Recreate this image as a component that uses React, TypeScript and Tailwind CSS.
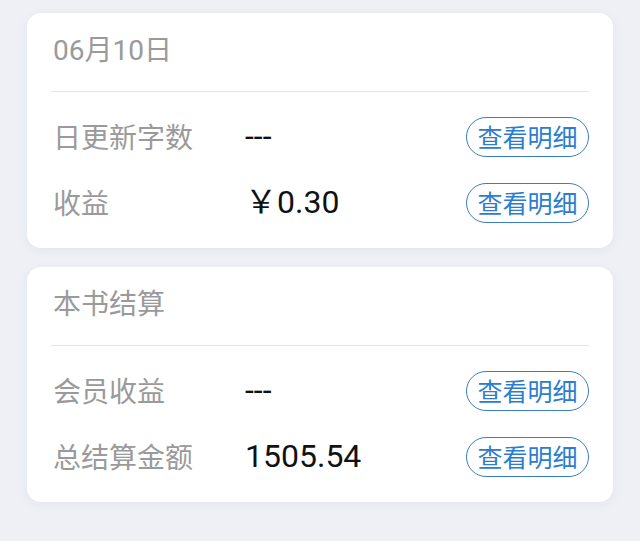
import React from "react";

const cjk = '"Noto Sans CJK SC", "Noto Sans", sans-serif';
const num = 'Roboto, "Noto Sans CJK SC", sans-serif';

function DetailButton() {
  return (
    <button
      className="h-[40px] w-[123px] rounded-full border-[1.5px] border-[#3a7cc0] text-[25px] leading-none text-[#2a7dd0] flex items-center justify-center pb-[1px]"
      style={{ fontFamily: cjk }}
    >
      查看明细
    </button>
  );
}

function Row({ label, value }: { label: string; value: string }) {
  return (
    <div className="h-[66px] flex items-center">
      <div className="w-[194px] text-[28px] leading-none text-[#9a9a9a] pl-[2px] pb-[3px]" style={{ fontFamily: cjk }}>
        {label}
      </div>
      <div className="flex-1 text-[32px] text-[#111] leading-none pb-[3px]" style={{ fontFamily: num }}>
        {value}
      </div>
      <DetailButton />
    </div>
  );
}

function Card({ title, rows }: { title: string; rows: { label: string; value: string }[] }) {
  return (
    <div className="bg-white rounded-[14px] shadow-[0_2px_8px_rgba(160,170,200,0.15)] px-6 pb-[12px]">
      <div className="h-[78px] flex items-center pl-[2px] pb-[3px] text-[28px] leading-none text-[#9a9a9a]" style={{ fontFamily: num }}>
        {title}
      </div>
      <div className="h-px bg-[#e6e6e8]" />
      <div className="pt-[12px]">
        {rows.map((r) => (
          <Row key={r.label} label={r.label} value={r.value} />
        ))}
      </div>
    </div>
  );
}

export default function App() {
  return (
    <div className="w-[640px] h-[541px] bg-[#eef0f6] px-[27px] pt-[13px] flex flex-col gap-[19px]">
      <Card
        title="06月10日"
        rows={[
          { label: "日更新字数", value: "---" },
          { label: "收益", value: "￥0.30" },
        ]}
      />
      <Card
        title="本书结算"
        rows={[
          { label: "会员收益", value: "---" },
          { label: "总结算金额", value: "1505.54" },
        ]}
      />
    </div>
  );
}
